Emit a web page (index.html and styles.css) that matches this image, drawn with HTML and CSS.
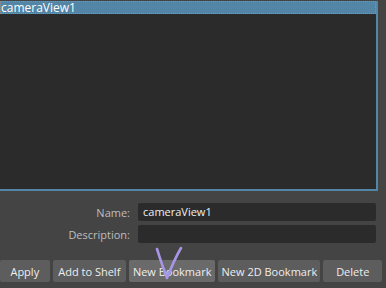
FILE: index.html
```html
<!DOCTYPE html>
<html lang="en">
<head>
    <meta charset="UTF-8">
    <title>Bookmark Editor</title>
    <link rel="stylesheet" href="styles.css">
</head>
<body>
    <div class="editor">
        <div class="list-row">
            <div class="bookmark-list">
                <div class="item selected">cameraView1</div>
            </div>
        </div>
        <div class="fields">
            <div class="field">
                <label>Name:</label>
                <div class="input">cameraView1</div>
            </div>
            <div class="field">
                <label>Description:</label>
                <div class="input"></div>
            </div>
        </div>
        <div class="buttons">
            <button class="btn-apply">Apply</button>
            <button class="btn-shelf">Add to Shelf</button>
            <button class="btn-new hover">New Bookmark</button>
            <button class="btn-2d">New 2D Bookmark</button>
            <button class="btn-delete">Delete</button>
        </div>
    </div>
    <svg class="mark" width="30" height="36" viewBox="0 0 30 36">
        <path d="M2 3 C5 12 8 22 12 32 C16 22 20 12 26 2" fill="none" stroke="#a796e6" stroke-width="2.6" stroke-linecap="round" stroke-linejoin="round"/>
    </svg>
</body>
</html>
```

FILE: styles.css
```css
:root {
    --bg-color: #444444;
    --field-color: #2b2b2b;
    --button-color: #5d5d5d;
    --text-color: #eeeeee;
    --label-color: #bdbdbd;
}
body {
    margin: 0;
    width: 386px;
    height: 288px;
    overflow: hidden;
    background: var(--bg-color);
    font-family: "Open Sans", "DejaVu Sans", sans-serif;
    font-size: 11px;
    color: var(--text-color);
    position: relative;
}
.editor {
    display: flex;
    flex-direction: column;
}
.list-row {
    padding-right: 8px;
}
.bookmark-list {
    height: 188px;
    background: var(--field-color);
    border-right: 2px solid #5285a6;
    border-bottom: 2px solid #5285a6;
}
.item {
    height: 13px;
    line-height: 13px;
    padding-left: 1px;
    margin-top: 1px;
    font-size: 12px;
}
.item.selected {
    background: #5285a6;
    color: #ffffff;
    outline: 1px dotted #9b8f78;
    outline-offset: -1px;
}
.fields {
    display: flex;
    flex-direction: column;
    gap: 4px;
    margin-top: 12px;
    padding-right: 10px;
}
.field {
    display: flex;
    align-items: center;
    height: 18px;
}
.field label {
    width: 134px;
    text-align: right;
    color: var(--label-color);
    padding-right: 4px;
    box-sizing: border-box;
}
.field .input {
    flex: 1;
    height: 18px;
    line-height: 18px;
    background: var(--field-color);
    border-radius: 2px;
    padding-left: 5px;
    margin-left: 4px;
}
.buttons {
    display: flex;
    gap: 3px;
    margin-top: 17px;
    padding-right: 4px;
}
.buttons button {
    height: 22px;
    padding: 0;
    border: none;
    border-radius: 2px;
    background: var(--button-color);
    color: var(--text-color);
    font-family: "Open Sans", "DejaVu Sans", sans-serif;
    font-size: 11px;
}
.buttons button.hover {
    background: #6a6a6a;
}
.btn-apply { width: 50px; }
.btn-shelf { width: 74px; }
.btn-new { width: 87px; }
.btn-2d { width: 103px; }
.btn-delete { width: 59px; }
.mark {
    position: absolute;
    left: 155px;
    top: 246px;
}
```
